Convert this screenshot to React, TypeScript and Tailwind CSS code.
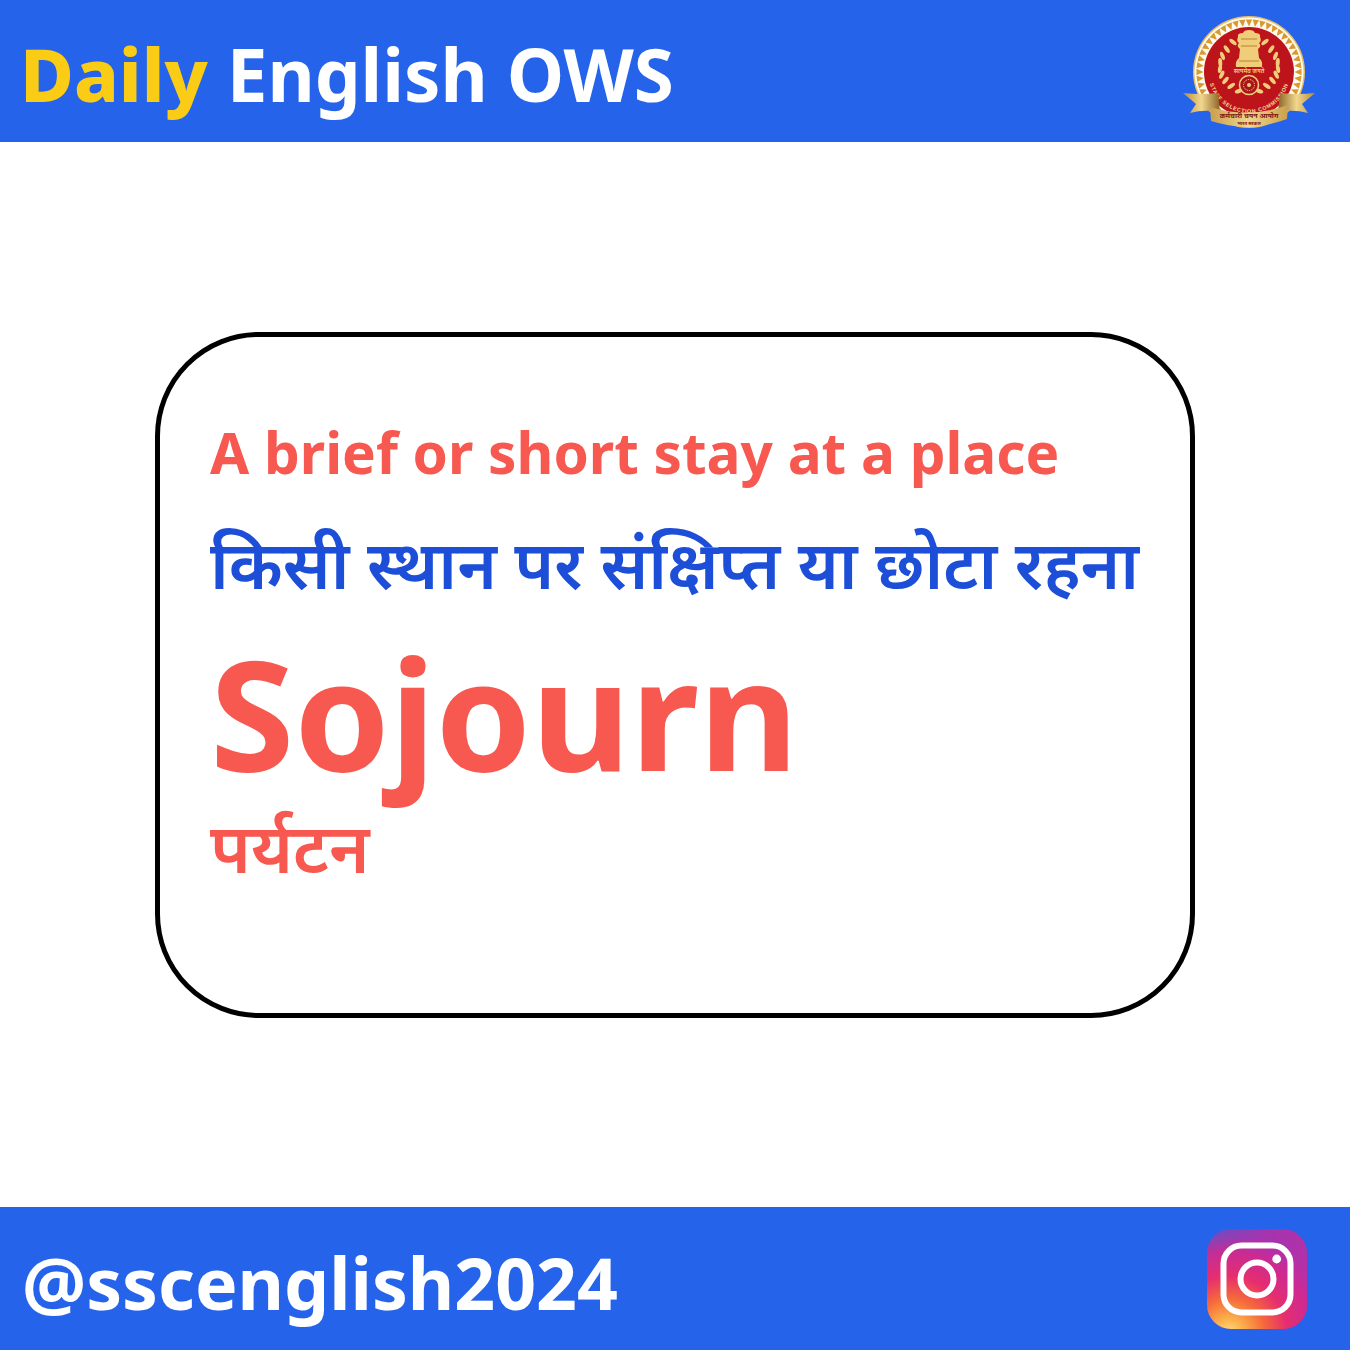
const rays = Array.from({ length: 48 }, (_, i) => i * 7.5);
const leaves = [0, 1, 2, 3, 4, 5, 6, 7, 8];

// wreath leaves placed along the left curve, mirrored for the right one
const leafAt = (t: number) => {
  const x = (1 - t) * (1 - t) * 51 + 2 * (1 - t) * t * 22 + t * t * 57;
  const y = (1 - t) * (1 - t) * 29 + 2 * (1 - t) * t * 58 + t * t * 78;
  return { x, y };
};

const SscLogo = () => (
  <svg width="134" height="116" viewBox="0 0 134 116">
    <defs>
      <linearGradient id="wing" x1="0" y1="0" x2="1" y2="0">
        <stop offset="0" stopColor="#b98d3e" />
        <stop offset="0.5" stopColor="#f1d78e" />
        <stop offset="1" stopColor="#8d6526" />
      </linearGradient>
      <linearGradient id="wingR" x1="0" y1="0" x2="1" y2="0">
        <stop offset="0" stopColor="#8d6526" />
        <stop offset="0.5" stopColor="#f1d78e" />
        <stop offset="1" stopColor="#b98d3e" />
      </linearGradient>
      <linearGradient id="band" x1="0" y1="0" x2="1" y2="0">
        <stop offset="0" stopColor="#c9a04e" />
        <stop offset="0.5" stopColor="#f0d68c" />
        <stop offset="1" stopColor="#c9a04e" />
      </linearGradient>
      <path id="sscArc" d="M26 59 A41 41 0 0 0 108 59" fill="none" />
    </defs>
    <circle cx="67" cy="59" r="56" fill="#e8bf68" />
    <circle cx="67" cy="59" r="54.5" fill="#fffaf0" />
    {rays.map((a) => (
      <polygon key={a} points="63.8,6.5 70.2,6.5 67,13.5" fill="#d69a2e" transform={`rotate(${a} 67 59)`} />
    ))}
    <circle cx="67" cy="59" r="46" fill="#fffaf0" />
    <circle cx="67" cy="59" r="45" fill="#bd141c" />

    {/* emblem */}
    <path
      d="M67 17 q5 0 6 3 q6 0 5 4 q2 4 -1 6 q3 3 -1 6 l1 9 q4 3 3 9 h-26 q-1 -6 3 -9 l1 -9 q-4 -3 -1 -6 q-3 -2 -1 -6 q-1 -4 5 -4 q1 -3 6 -3z"
      fill="#f0cd78"
    />
    <path d="M59 26 h16 M59 33 h16 M57 48 h20" stroke="#b98433" strokeWidth="1" fill="none" />
    <text
      x="67"
      y="60"
      textAnchor="middle"
      fontSize="6"
      fontWeight="600"
      fill="#f2d27a"
      fontFamily="'Noto Sans Devanagari', 'Noto Sans', sans-serif"
    >
      सत्यमेव जयते
    </text>

    {/* wreath */}
    {leaves.map((i) => {
      const { x, y } = leafAt(i / 8);
      const rot = -50 + i * 15;
      return (
        <g key={i} fill="#f0cd78">
          <ellipse cx={x} cy={y} rx="2" ry="4.4" transform={`rotate(${rot} ${x} ${y})`} />
          <ellipse cx={134 - x} cy={y} rx="2" ry="4.4" transform={`rotate(${-rot} ${134 - x} ${y})`} />
        </g>
      );
    })}

    {/* wheel */}
    <circle cx="67" cy="72" r="9.5" fill="#a9151a" stroke="#f0cd78" strokeWidth="1.6" />
    <circle cx="67" cy="72" r="5.5" fill="none" stroke="#f0cd78" strokeWidth="1" strokeDasharray="1.4 1" />
    <circle cx="67" cy="72" r="2" fill="#f0cd78" />

    <text fontSize="5.4" fontWeight="700" fill="#f6dc92" fontFamily="'Liberation Sans', sans-serif" letterSpacing="0.7">
      <textPath href="#sscArc" startOffset="50%" textAnchor="middle">
        STAFF SELECTION COMMISSION
      </textPath>
    </text>

    {/* ribbon */}
    <path d="M1 80 Q18 82 36 80 L38 99 Q22 96 8 100 L14 91z" fill="url(#wing)" />
    <path d="M133 80 Q116 82 98 80 L96 99 Q112 96 126 100 L120 91z" fill="url(#wingR)" />
    <path d="M28 94 Q67 106 106 92 L105 106 Q67 120 29 108z" fill="url(#band)" />
    <text
      x="67"
      y="105"
      textAnchor="middle"
      fontSize="7"
      fontWeight="700"
      fill="#7c1412"
      fontFamily="'Noto Sans Devanagari', 'Noto Sans', sans-serif"
    >
      कर्मचारी चयन आयोग
    </text>
    <text
      x="67"
      y="112"
      textAnchor="middle"
      fontSize="4.6"
      fontWeight="700"
      fill="#7c1412"
      fontFamily="'Noto Sans Devanagari', 'Noto Sans', sans-serif"
    >
      भारत सरकार
    </text>
  </svg>
);

const InstagramLogo = () => (
  <svg width="100" height="100" viewBox="0 0 100 100">
    <defs>
      <radialGradient id="igWarm" cx="0.22" cy="1.05" r="1.05">
        <stop offset="0" stopColor="#ffe08a" />
        <stop offset="0.14" stopColor="#fdb24c" />
        <stop offset="0.34" stopColor="#f56a3a" />
        <stop offset="0.55" stopColor="#e62e6e" />
        <stop offset="0.78" stopColor="#d4288c" stopOpacity="0.85" />
        <stop offset="1" stopColor="#c32aa3" stopOpacity="0" />
      </radialGradient>
      <linearGradient id="igBase" x1="0" y1="0" x2="1" y2="0.25">
        <stop offset="0" stopColor="#5a55c8" />
        <stop offset="0.55" stopColor="#a334b0" />
        <stop offset="1" stopColor="#b231a8" />
      </linearGradient>
    </defs>
    <rect width="100" height="100" rx="24" fill="url(#igBase)" />
    <rect width="100" height="100" rx="24" fill="url(#igWarm)" />
    <rect x="16.5" y="16.5" width="67" height="67" rx="18" fill="none" stroke="#fff" strokeWidth="6" />
    <circle cx="50" cy="50" r="16.5" fill="none" stroke="#fff" strokeWidth="6" />
    <circle cx="69.7" cy="30" r="4.4" fill="#fff" />
  </svg>
);

export default function App() {
  return (
    <div className="w-[1350px] h-[1350px] flex flex-col bg-white font-['Noto_Sans','Noto_Sans_Devanagari',sans-serif] font-bold">
      <header className="h-[142px] shrink-0 bg-[#2563eb] flex items-center justify-between pl-[20px] pr-[34px]">
        <h1 className="text-[72.7px] leading-none pt-[6px] text-white">
          <span className="text-[73.6px] font-extrabold text-[#facc15]">Daily</span> English OWS
        </h1>
        <SscLogo />
      </header>

      <main className="flex-1 flex items-center justify-center">
        <div className="w-[1040px] h-[686px] border-[5px] border-black rounded-[104px] pl-[50px] pt-[77px]">
          <p className="text-[56.7px] leading-[76px] text-[#f75950]">A brief or short stay at a place</p>
          <p className="mt-[33px] text-[67px] leading-[80px] font-semibold text-[#1d4ed8]">किसी स्थान पर संक्षिप्त या छोटा रहना</p>
          <p className="mt-[14px] text-[153px] leading-[190px] text-[#f75950]">Sojourn</p>
          <p className="text-[68.5px] leading-[80px] font-semibold text-[#f75950]">पर्यटन</p>
        </div>
      </main>

      <footer className="h-[143px] shrink-0 bg-[#2563eb] flex items-center justify-between pl-[22px] pr-[43px]">
        <span className="text-[71.5px] leading-none pt-[8px] text-white">@sscenglish2024</span>
        <InstagramLogo />
      </footer>
    </div>
  );
}
